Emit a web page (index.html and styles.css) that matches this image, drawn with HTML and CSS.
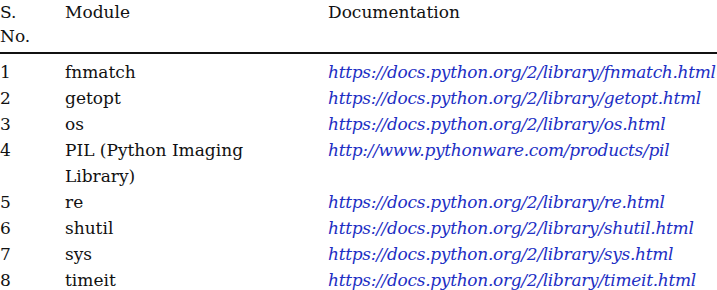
FILE: index.html
```html
<!DOCTYPE html>
<html>
<head>
<meta charset="utf-8">
<link rel="stylesheet" href="styles.css">
</head>
<body>
<table class="tbl">
  <colgroup>
    <col class="c-no">
    <col class="c-mod">
    <col class="c-doc">
  </colgroup>
  <thead>
    <tr>
      <th>S.<br>No.</th>
      <th>Module</th>
      <th>Documentation</th>
    </tr>
  </thead>
  <tbody>
    <tr class="first"><td>1</td><td>fnmatch</td><td><a class="lnk">https://docs.python.org/2/library/fnmatch.html</a></td></tr>
    <tr><td>2</td><td>getopt</td><td><a class="lnk">https://docs.python.org/2/library/getopt.html</a></td></tr>
    <tr><td>3</td><td>os</td><td><a class="lnk">https://docs.python.org/2/library/os.html</a></td></tr>
    <tr><td>4</td><td>PIL (Python Imaging Library)</td><td><a class="lnk">http://www.pythonware.com/products/pil</a></td></tr>
    <tr><td>5</td><td>re</td><td><a class="lnk">https://docs.python.org/2/library/re.html</a></td></tr>
    <tr><td>6</td><td>shutil</td><td><a class="lnk">https://docs.python.org/2/library/shutil.html</a></td></tr>
    <tr><td>7</td><td>sys</td><td><a class="lnk">https://docs.python.org/2/library/sys.html</a></td></tr>
    <tr><td>8</td><td>timeit</td><td><a class="lnk">https://docs.python.org/2/library/timeit.html</a></td></tr>
  </tbody>
</table>
</body>
</html>
```
FILE: styles.css
```css
html, body {
  margin: 0;
  padding: 0;
  background: #ffffff;
}
body {
  font-family: "DejaVu Serif", serif;
  font-size: 17px;
  color: #111111;
  overflow: hidden;
}
.tbl {
  border-collapse: collapse;
  table-layout: fixed;
  width: 740px;
}
.c-no { width: 65px; }
.c-mod { width: 263px; }
.c-doc { width: 412px; }
th, td {
  padding: 0;
  text-align: left;
  vertical-align: top;
  font-weight: normal;
  white-space: normal;
}
th {
  line-height: 24px;
  padding-bottom: 4px;
  border-bottom: 2px solid #111;
}
td {
  line-height: 26px;
}
.tbl td:nth-child(2) { padding-right: 14px; }
tr.first td { padding-top: 5px; }
.lnk {
  color: #1d2fc4;
  font-style: italic;
  text-decoration: none;
  white-space: nowrap;
  letter-spacing: -0.3px;
}
```
